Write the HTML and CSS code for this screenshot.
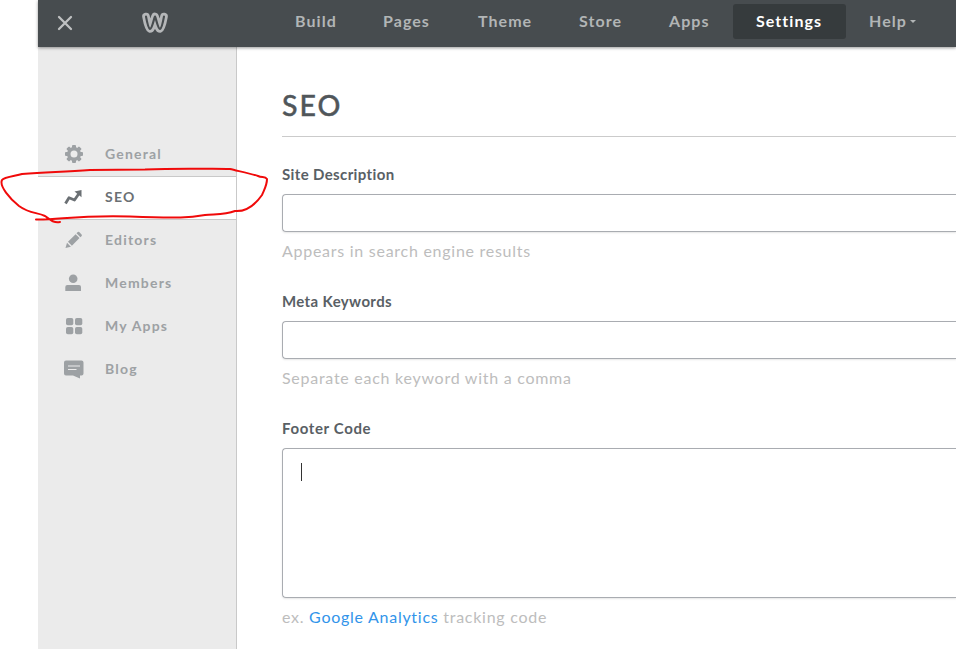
FILE: index.html
```html
<!DOCTYPE html>
<html lang="en">
<head>
<meta charset="utf-8">
<title>Settings - SEO</title>
<link rel="stylesheet" href="styles.css">
</head>
<body>
<div class="app">
  <header class="topbar">
    <div class="brand">
      <svg class="close" viewBox="0 0 16 16"><path d="M2 2 14 14M14 2 2 14"/></svg>
      <svg class="logo" viewBox="0 0 28 22"><path class="logo-fill" d="M5 4.500 C6 10 7.500 16.500 9 17 C11 17 12.500 8 14 4.500 C15.500 8 17 17 19 17 C20.500 16.500 22 10 23 4.500"/><path class="logo-cut" d="M5 4.500 C6 10 7.500 16.500 9 17 C11 17 12.500 8 14 4.500 C15.500 8 17 17 19 17 C20.500 16.500 22 10 23 4.500"/></svg>
    </div>
    <nav class="tabs">
      <a>Build</a>
      <a>Pages</a>
      <a>Theme</a>
      <a>Store</a>
      <a>Apps</a>
      <a class="current">Settings</a>
      <a>Help<i class="caret"></i></a>
    </nav>
  </header>
  <div class="body">
    <aside class="sidebar">
      <a class="item">
        <svg viewBox="0 0 20 20"><g class="fill"><rect x="8" y="1" width="4" height="18" rx="1"/><rect x="8" y="1" width="4" height="18" rx="1" transform="rotate(45 10 10)"/><rect x="8" y="1" width="4" height="18" rx="1" transform="rotate(90 10 10)"/><rect x="8" y="1" width="4" height="18" rx="1" transform="rotate(135 10 10)"/><circle cx="10" cy="10" r="7"/></g><circle class="hole" cx="10" cy="10" r="3.500"/></svg>
        <span>General</span>
      </a>
      <a class="item active">
        <svg viewBox="0 0 20 20"><path class="trend" d="M1.500 16.500 5 10.800 10.500 13 15 6.500"/><path class="fill" d="M10.500 4.500 17.500 3 17.500 10.300Z"/></svg>
        <span>SEO</span>
      </a>
      <a class="item">
        <svg viewBox="0 0 20 20"><path class="fill" d="M1.500 18 3 12.800 6.900 16.700ZM4 11.800 11.600 4.200 15.500 8.100 7.900 15.700ZM12.500 3.300 13.800 2Q14.500 1.500 15.200 2.100L17.600 4.500Q18.200 5.200 17.700 5.900L16.400 7.200Z"/></svg>
        <span>Editors</span>
      </a>
      <a class="item">
        <svg viewBox="0 0 20 20"><circle class="fill" cx="9.200" cy="5.700" r="4.300"/><path class="fill" d="M1.300 18V14Q1.300 12 3.300 12H15Q17 12 17 14V18Z"/></svg>
        <span>Members</span>
      </a>
      <a class="item">
        <svg viewBox="0 0 20 20"><g class="fill"><rect x="2" y="2" width="7.300" height="7.300" rx="1.800"/><rect x="11" y="2" width="7.300" height="7.300" rx="1.800"/><rect x="2" y="11" width="7.300" height="7.300" rx="1.800"/><rect x="11" y="11" width="7.300" height="7.300" rx="1.800"/></g></svg>
        <span>My Apps</span>
      </a>
      <a class="item">
        <svg viewBox="0 0 20 20"><path class="fill" d="M2 1.500H17.500Q19.500 1.500 19.500 3.500V14.500Q19.500 16.500 17.500 16.500H16V19.500L9 16.500H2Q0 16.500 0 14.500V3.500Q0 1.500 2 1.500Z"/><path class="lines" d="M4 7H16M4 10.500H12.500"/></svg>
        <span>Blog</span>
      </a>
    </aside>
    <main class="content">
      <h1>SEO</h1>
      <section class="field">
        <label>Site Description</label>
        <div class="input"></div>
        <p class="hint">Appears in search engine results</p>
      </section>
      <section class="field">
        <label>Meta Keywords</label>
        <div class="input"></div>
        <p class="hint">Separate each keyword with a comma</p>
      </section>
      <section class="field">
        <label class="wide">Footer Code</label>
        <div class="input area"><i class="cursor"></i></div>
        <p class="hint">ex. <a>Google Analytics</a> tracking code</p>
      </section>
    </main>
  </div>
  <svg class="scribble" viewBox="0 0 280 70"><path d="M36 59.500C60 60 75 55 130 56.500C180 58.500 190 57.500 205 55C215 54 225 55 235 51C247 52 255 45 262 35C265 28 267 25 267 19C265 16 262 18 258 16C252 14 238 11 230 9C210 9 180 8 145 9.500L90 10C65 12 50 12 22 14C15 16 4 17 2 20C-1 26 10 39 19 46C30 54 37 52 45 56C52 61 54 63 60 62"/></svg>
</div>
</body>
</html>
```
FILE: styles.css
```css
* { box-sizing: border-box; }
body { margin: 0; background: #fff; font-family: Lato, "Open Sans", sans-serif; overflow: hidden; }
.app { position: relative; height: 649px; padding-left: 38px; display: flex; flex-direction: column; overflow: hidden; }
.topbar { height: 47px; flex: none; display: flex; background: #474c4f; box-shadow: 0 1px 3px rgba(0,0,0,.4); z-index: 1; }
.brand { width: 234px; display: flex; padding-left: 19px; }
.close { width: 16px; height: 16px; margin-top: 15px; fill: none; stroke: #bfc1c2; stroke-width: 2.3; stroke-linecap: round; }
.logo { width: 28px; height: 22px; margin: 12px 0 0 68px; fill: none; stroke-linejoin: round; stroke-linecap: round; }
.logo-fill { stroke: #b5b7b9; stroke-width: 7.600; }
.logo-cut { stroke: #474c4f; stroke-width: 2.100; }
.tabs { display: grid; grid-template-columns: 88px 95px 101px 90px 87px 113px 94px; height: 35px; margin-top: 4px; }
.tabs a { display: flex; align-items: center; padding: 0 0 2px 23px; font-size: 16px; line-height: 33px; font-weight: 700; letter-spacing: 1.05px; color: #b2b5b6; white-space: nowrap; }
.tabs .current { background: #363b3d; color: #fff; border-radius: 3px; }
.caret { border: 3px solid transparent; border-top-color: #b2b5b6; border-bottom: 0; margin: 2px 0 0 3px; }
.body { display: flex; flex: 1; min-height: 0; }
.sidebar { width: 199px; flex: none; padding-top: 86px; background: #ebebeb; border-right: 1px solid #c9c9c9; }
.item { height: 43px; display: flex; align-items: center; padding: 0 0 2px 26px; gap: 21px; font-size: 14px; font-weight: 700; letter-spacing: 1.2px; color: #9da1a4; }
.item svg { width: 20px; height: 20px; flex: none; }
.fill { fill: currentColor; }
.hole { fill: #ebebeb; }
.trend { fill: none; stroke: currentColor; stroke-width: 2.800; stroke-linejoin: round; }
.lines { fill: none; stroke: #ebebeb; stroke-width: 1.200; }
.active { height: 44px; margin-bottom: -1px; padding-bottom: 3px; background: #fff; border: solid #c9c9c9; border-width: 1px 0; color: #6b7074; }
.content { flex: 1; min-width: 0; padding: 41px 0 0 45px; }
h1 { margin: 0 0 28px; height: 49px; border-bottom: 1px solid #cbcbcb; font-size: 28.500px; line-height: 34px; font-weight: 500; color: #50565a; letter-spacing: 2px; -webkit-text-stroke: .4px #50565a; }
.field { margin-bottom: 30px; }
label { display: block; height: 29px; font-size: 15px; line-height: 18px; font-weight: 700; color: #596065; letter-spacing: .37px; }
.wide { letter-spacing: .63px; }
.input { height: 38px; border: 1px solid #a9acb1; border-right: 0; border-radius: 4px 0 0 4px; box-shadow: 0 1px 2px rgba(0,0,0,.1); }
.area { height: 150px; padding: 14px 18px; }
.cursor { display: block; width: 1px; height: 18px; background: #333; }
.hint { margin: 9px 0 0; height: 21px; line-height: 20px; font-size: 16px; color: #bdbdbd; letter-spacing: .73px; white-space: nowrap; }
.hint a { color: #3294ea; }
.scribble { position: absolute; left: 0; top: 160px; width: 280px; height: 70px; fill: none; stroke: #f00a0a; stroke-width: 2; stroke-linecap: round; stroke-linejoin: round; z-index: 2; }
```
